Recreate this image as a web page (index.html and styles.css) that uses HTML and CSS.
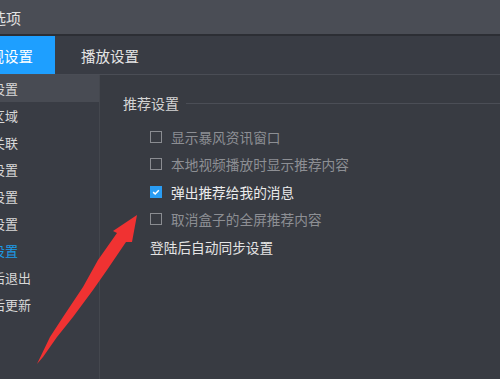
FILE: index.html
```html
<!DOCTYPE html>
<html lang="zh-CN">
<head>
  <meta charset="UTF-8" />
  <title>选项</title>
  <link rel="stylesheet" href="styles.css">
</head>
<body>

  <div class="window">
    <div class="titlebar">选项</div>

    <div class="tabs">
      <div class="tab active">常规设置</div>
      <div class="tab">播放设置</div>
    </div>

    <div class="content">
      <div class="sidebar">
        <div class="side-item selected">基本设置</div>
        <div class="side-item">播放区域</div>
        <div class="side-item">文件关联</div>
        <div class="side-item">热键设置</div>
        <div class="side-item">字幕设置</div>
        <div class="side-item">截图设置</div>
        <div class="side-item current">推荐设置</div>
        <div class="side-item">关闭后退出</div>
        <div class="side-item">自动后更新</div>
      </div>

      <div class="main">
        <div class="group-title">
          <span>推荐设置</span>
          <div class="rule"></div>
        </div>

        <div class="options">
          <div class="opt muted"><span class="box"></span>显示暴风资讯窗口</div>
          <div class="opt muted"><span class="box"></span>本地视频播放时显示推荐内容</div>
          <div class="opt checked">
            <span class="box">
              <svg viewBox="0 0 12 12" width="12" height="12"><path d="M2.6 6.2 L5 8.4 L9.4 3.8" fill="none" stroke="#fff" stroke-width="1.8"/></svg>
            </span>弹出推荐给我的消息
          </div>
          <div class="opt muted"><span class="box"></span>取消盒子的全屏推荐内容</div>
          <div class="opt plain">登陆后自动同步设置</div>
        </div>
      </div>
    </div>
  </div>

  <!-- annotation arrow drawn over the screenshot -->
  <svg class="arrow" viewBox="0 0 500 379" width="500" height="379">
    <polygon fill="#f03232" points="137,215 132,242 126,242 107,270 93,290 73,317 57,337 43,357 37,364 50,337 63,317 83,287 98,260 117,233 113,231"/>
  </svg>

</body>
</html>
```

FILE: styles.css
```css
body {
  margin: 0;
  width: 500px;
  height: 379px;
  overflow: hidden;
  position: relative;
  background: #393c44;
  font-family: "Noto Sans CJK SC", "Noto Sans", sans-serif;
  color: #dcdcdc;
}

.window {
  margin-left: -47px;
  width: 547px;
  height: 379px;
  display: flex;
  flex-direction: column;
}

.titlebar {
  height: 34px;
  background: #4a4d55;
  border-bottom: 2px solid #2c2e34;
  padding-left: 38px;
  display: flex;
  align-items: center;
  font-size: 15px;
  color: #e2e2e2;
}

.tabs {
  height: 38px;
  display: flex;
  background: #393c44;
  border-bottom: 1px solid #4a4d55;
}

.tab {
  padding: 0 26px;
  display: flex;
  align-items: center;
  font-size: 14.5px;
  color: #e4e4e4;
}

.tab.active {
  padding: 0 22px;
  background: #1e9fff;
  color: #fff;
}

.content {
  flex: 1;
  display: flex;
}

.sidebar {
  width: 146px;
  border-right: 1px solid #44474e;
}

.side-item {
  height: 27px;
  padding-left: 13px;
  display: flex;
  align-items: center;
  font-size: 13px;
  color: #d8d8d8;
}

.side-item.selected {
  background: #484b53;
}

.side-item.current {
  color: #1c9be8;
}

.main {
  flex: 1;
  padding: 18px 0 0 23px;
  background: #383b42;
}

.group-title {
  height: 20px;
  display: flex;
  align-items: center;
  gap: 7px;
  font-size: 14px;
  color: #d4d4d4;
}

.rule {
  flex: 1;
  height: 1px;
  background: #4b4e56;
}

.options {
  margin-top: 10px;
  padding-left: 27px;
}

.opt {
  height: 27.5px;
  display: flex;
  align-items: center;
  gap: 9px;
  font-size: 13.7px;
}

.box {
  width: 10px;
  height: 10px;
  border: 1px solid #8a8c91;
  display: flex;
  align-items: center;
  justify-content: center;
}

.opt.muted {
  color: #8d8f94;
}

.opt.checked {
  color: #ececec;
}

.opt.checked .box {
  border-color: #2a9df4;
  background: #2a9df4;
}

.opt.plain {
  color: #e4e4e4;
}

.arrow {
  position: absolute;
  left: 0;
  top: 0;
  pointer-events: none;
}
```
